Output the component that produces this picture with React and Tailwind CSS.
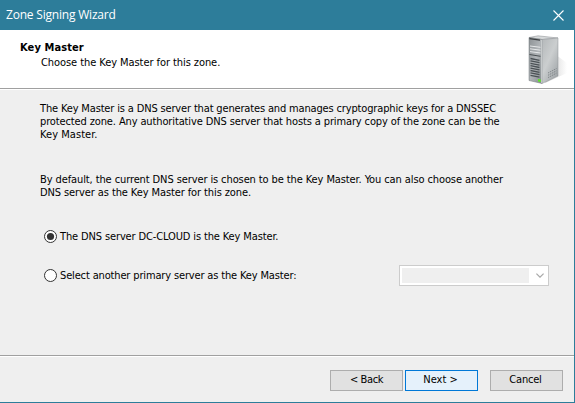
import React from "react";

function Line({ className = "", children }) {
  return <div className={"h-[13px] whitespace-nowrap leading-[13px] " + className}>{children}</div>;
}

function Radio({ checked, children, className = "" }) {
  return (
    <label className="flex h-[13px] items-center">
      <svg className="size-[13px] shrink-0" viewBox="0 0 13 13">
        <circle cx="6.5" cy="6.5" r="6" fill="#fff" stroke="#333" />
        {checked && <circle cx="6.5" cy="6.5" r="3.6" fill="#333" />}
      </svg>
      <Line className={"ml-[3px] " + className}>{children}</Line>
    </label>
  );
}

function Server() {
  return (
    <svg className="h-[50px] w-[42px]" viewBox="0 0 42 50">
      <defs>
        <linearGradient id="front" x1="0" y1="0" x2="1" y2="1">
          <stop offset="0" stopColor="#8d9295" />
          <stop offset=".5" stopColor="#b0b4b7" />
          <stop offset="1" stopColor="#858b8e" />
        </linearGradient>
        <linearGradient id="side" x1="0" y1="0" x2=".8" y2="1">
          <stop offset="0" stopColor="#b4b8ba" />
          <stop offset=".5" stopColor="#cbcecf" />
          <stop offset="1" stopColor="#9fa4a7" />
        </linearGradient>
        <linearGradient id="shade" x1="0" x2="1">
          <stop offset="0" stopColor="#c8c8c8" />
          <stop offset="1" stopColor="#fff" />
        </linearGradient>
      </defs>
      <path d="M28 20 39 28V38L17 48Z" fill="url(#shade)" />
      <path d="M1 2.500 10 .8 30 3 14 4.500Z" fill="#d7dadb" stroke="#85898c" strokeWidth=".5" />
      <path d="M1 2.500 14 4.500V48.500L1 45.500Z" fill="url(#front)" stroke="#73787c" strokeWidth=".5" />
      <path d="M14 4.500 30 3V41L14 48.500Z" fill="url(#side)" stroke="#8e9396" strokeWidth=".5" />
      <path d="M1.500 3 12 4.500V5.800L1.500 4.200Z" fill="#3b3f42" />
      <path d="M2 11 12.500 12.300M2 13.800 12.500 15.200M2 16.600 12.500 18" stroke="#e6e8e9" strokeWidth="1" />
      <path d="M1.500 19.500 12.500 21.300" stroke="#4a4f52" strokeWidth="1" />
      <path d="M2.500 23.500 11.500 25.300M2.500 25.900 11.500 27.700M2.500 28.300 11.500 30.100M2.500 30.700 11.500 32.500M2.500 33.100 11.500 34.900M2.500 35.500 11.500 37.300M2.500 37.900 11.500 39.700M2.500 40.300 11.500 42.100" stroke="#4b5155" strokeWidth="1.300" />
      <path d="M13.500 4.800V48" stroke="#dcdfe0" strokeWidth=".7" />
      <path d="M20 38 28.500 33.500M20 40.300 28.500 35.800M20 42.600 28.500 38.100" stroke="#7c8184" strokeWidth=".9" strokeDasharray="1.400 .8" />
      <path d="M10 44 12.800 44.500V47L10 46.500Z" fill="#5be526" />
    </svg>
  );
}

function Button({ children, className }) {
  return (
    <button className={"flex h-[21px] w-[73px] items-center justify-center border whitespace-nowrap " + className}>
      {children}
    </button>
  );
}

export default function App() {
  return (
    <div className="flex h-[403px] w-[575px] flex-col overflow-hidden border-r border-b border-[#2d7d9a] bg-[#efefef] font-['DejaVu_Sans_Condensed','DejaVu_Sans',sans-serif] text-[11px] text-black">
      <header className="flex h-[30px] shrink-0 items-center justify-between bg-[#2d7d9a] pr-[10px] pl-[6px] text-white">
        <div className="font-['Open_Sans','Noto_Sans',sans-serif] text-[12px] leading-[16px] tracking-[-0.2px] whitespace-nowrap">Zone Signing Wizard</div>
        <svg className="size-[11px]" viewBox="0 0 11 11" fill="none" stroke="#fff" strokeWidth="1.100">
          <path d="M.5 .5 10.500 10.500M10.500 .5 .5 10.500" />
        </svg>
      </header>
      <section className="flex h-[60px] shrink-0 justify-between border-b border-white bg-white shadow-[inset_0_-1px_0_#a0a0a0]">
        <div className="pt-[11px] pl-[20px]">
          <Line className="font-bold tracking-[0.1px]">Key Master</Line>
          <Line className="mt-[2px] ml-[21px] tracking-[-0.07px]">Choose the Key Master for this zone.</Line>
        </div>
        <div className="pt-[5px] pr-[4px]"><Server /></div>
      </section>
      <main className="flex h-[265px] shrink-0 flex-col pt-[12px] pl-[40px]">
        <Line className="tracking-[-0.155px]">The Key Master is a DNS server that generates and manages cryptographic keys for a DNSSEC</Line>
        <Line className="tracking-[-0.124px]">protected zone. Any authoritative DNS server that hosts a primary copy of the zone can be the</Line>
        <Line className="tracking-[0.05px]">Key Master.</Line>
        <Line className="mt-[32px] tracking-[-0.103px]">By default, the current DNS server is chosen to be the Key Master. You can also choose another</Line>
        <Line className="tracking-[-0.1px]">DNS server as the Key Master for this zone.</Line>
        <div className="mt-[31px] pl-[4px]">
          <Radio checked className="tracking-[-0.13px]">The DNS server DC-CLOUD is the Key Master.</Radio>
        </div>
        <div className="mt-[22px] flex h-[21px] items-center justify-between pr-[25px] pl-[4px]">
          <Radio className="tracking-[-0.15px]">Select another primary server as the Key Master:</Radio>
          <div className="flex h-[21px] w-[150px] items-center justify-between border border-[#ccc] bg-white pr-[4px] pl-[2px]">
            <div className="h-[15px] w-[127px] bg-[#efefef]" />
            <svg className="h-[5px] w-[8px]" viewBox="0 0 8 5" fill="none" stroke="#a8a8a8" strokeWidth="1.200">
              <path d="M.4 .6 4 4.200 7.600 .6" />
            </svg>
          </div>
        </div>
      </main>
      <footer className="flex grow border-t border-[#a0a0a0] pr-[11px] shadow-[inset_0_1px_0_#fff]">
        <div className="ml-auto flex pt-[14px]">
          <Button className="border-[#adadad] bg-[#e1e1e1] tracking-[-0.4px]">&lt; Back</Button>
          <Button className="ml-[2px] border-[#0078d7] bg-[#e5f1fb] pr-[2px]">Next &gt;</Button>
          <Button className="ml-[12px] border-[#adadad] bg-[#e1e1e1] pr-[2px] tracking-[-0.2px]">Cancel</Button>
        </div>
      </footer>
    </div>
  );
}
